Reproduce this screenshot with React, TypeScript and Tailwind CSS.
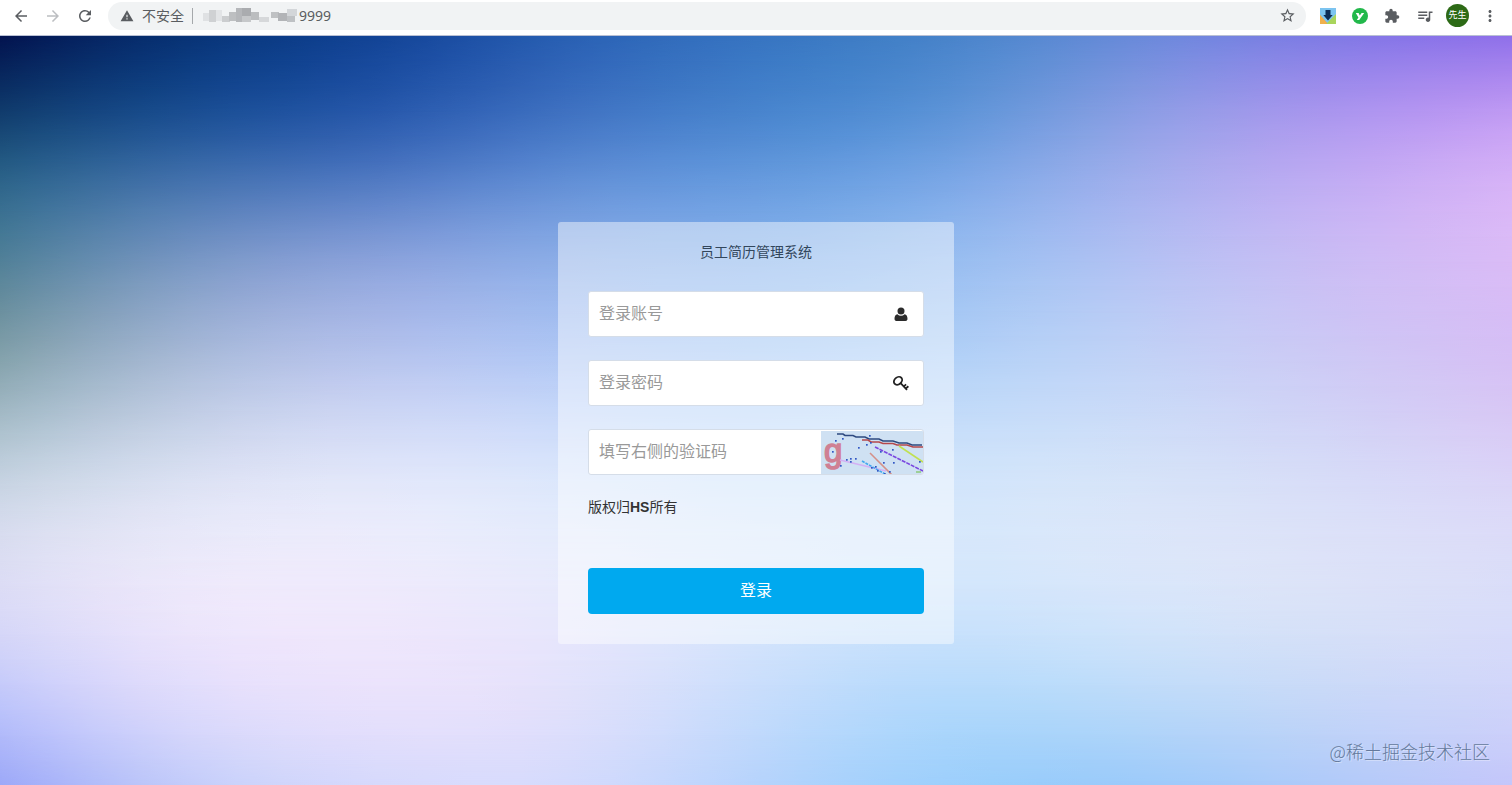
import React from "react";
import {
  MdArrowBack,
  MdArrowForward,
  MdRefresh,
  MdWarning,
  MdStarBorder,
  MdExtension,
  MdQueueMusic,
  MdMoreVert,
} from "react-icons/md";

// Wallpaper colours on an even grid: one list per row, top to bottom.
const palette: string[][] = [
  ["#03134f", "#083878", "#0f4096", "#2c62b6", "#3675c2", "#4484c8", "#6c90dc", "#8078e6", "#9070ea"],
  ["#0c3a6a", "#124c94", "#1e4fa8", "#4070c2", "#4282cc", "#5090d4", "#90a4e4", "#ac90f0", "#c49cf4"],
  ["#2f6a90", "#4a78b4", "#5078c4", "#6896dc", "#669ce0", "#7aaaea", "#a8b2ee", "#c4acf4", "#dab6f8"],
  ["#508098", "#809cca", "#93a4de", "#90b2ea", "#84b0ec", "#96c0f0", "#b4c4f4", "#ccbcf4", "#dcbcf6"],
  ["#7898a0", "#a4b6d8", "#b0bcec", "#a8c2f4", "#9cc4f4", "#a8ccf6", "#c0d2f6", "#ccc6f4", "#d4bcf6"],
  ["#a0b8c4", "#c4d0e8", "#d0d6f6", "#c8d8fa", "#b8d6fb", "#c2dcfa", "#cadcf8", "#d0d2f6", "#d8c6f4"],
  ["#ccd8e6", "#e2e6f8", "#e8ecfc", "#dfeafc", "#d2e6fc", "#d4e8fc", "#dae6f8", "#d6def8", "#dcd6f8"],
  ["#e0e0f4", "#f1edfc", "#f0edfc", "#e8edfc", "#e0ecfc", "#d6e8fc", "#e0e8fa", "#e0e4f8", "#dcdff8"],
  ["#d8d8f8", "#f2e8fc", "#f0e6fc", "#e8e6fc", "#d4e4fc", "#c4e0fc", "#d2e6fc", "#d8e2f6", "#d8dcfa"],
  ["#bcc4fc", "#e3defc", "#ece2fc", "#e6e0fa", "#c4dcfc", "#a8d6fc", "#b8daf8", "#c4d6f8", "#d0d4fa"],
  ["#9ca8f8", "#c8d2fa", "#d8dafc", "#dadcfe", "#b4d2fc", "#98d0fc", "#98c8fa", "#b0ccf8", "#c4c6fa"],
];

type Rgb = number[];

const toRgb = (hex: string): Rgb => [1, 3, 5].map((i) => parseInt(hex.slice(i, i + 2), 16));

// Cubic B-spline through a run of values, with the end values extended outwards.
function smooth<T>(items: T[], mix: (parts: T[], weights: number[]) => T, steps: number, extend: (a: T, b: T) => T): T[] {
  const n = items.length;
  const padded = [extend(items[0], items[1]), ...items, extend(items[n - 1], items[n - 2])];
  const out: T[] = [];
  for (let k = 0; k <= (n - 1) * steps; k++) {
    const i = Math.min(Math.floor(k / steps), n - 2);
    const t = k / steps - i;
    const weights = [
      (1 - t) ** 3 / 6,
      (3 * t ** 3 - 6 * t ** 2 + 4) / 6,
      (-3 * t ** 3 + 3 * t ** 2 + 3 * t + 1) / 6,
      t ** 3 / 6,
    ];
    const parts = [0, 1, 2, 3].map((d) => padded[Math.min(i + d, n + 1)]);
    out.push(mix(parts, weights));
  }
  return out;
}

const mixRgb = (parts: Rgb[], w: number[]): Rgb => [0, 1, 2].map((c) => parts.reduce((s, p, i) => s + p[c] * w[i], 0));
const extendRgb = (a: Rgb, b: Rgb): Rgb => a.map((v, c) => 2 * v - b[c]);
const mixRow = (rows: Rgb[][], w: number[]): Rgb[] => rows[0].map((_, j) => mixRgb(rows.map((r) => r[j]), w));
const extendRow = (a: Rgb[], b: Rgb[]): Rgb[] => a.map((v, j) => extendRgb(v, b[j]));

const wallpaper: string[][] = smooth(
  palette.map((row) => smooth(row.map(toRgb), mixRgb, 4, extendRgb)),
  mixRow,
  3,
  extendRow,
).map((row) => row.map((c) => `rgb(${c.map((v) => Math.max(0, Math.min(255, Math.round(v)))).join(",")})`));

function Wallpaper() {
  const last = wallpaper.length - 1;
  return (
    <svg className="absolute inset-0 size-full" viewBox="0 0 100 100" preserveAspectRatio="none" aria-hidden="true">
      <defs>
        {wallpaper.map((row, i) => (
          <linearGradient key={i} id={`row${i}`} gradientUnits="userSpaceOnUse" x1="0" y1="0" x2="100" y2="0">
            {row.map((color, j) => (
              <stop key={j} offset={j / (row.length - 1)} stopColor={color} />
            ))}
          </linearGradient>
        ))}
        {wallpaper.map((_, i) => (
          <React.Fragment key={i}>
            <linearGradient
              id={`fade${i}`}
              gradientUnits="userSpaceOnUse"
              x1="0"
              x2="0"
              y1={((i - 1) * 100) / last}
              y2={(i * 100) / last}
            >
              <stop offset="0" stopColor="#fff" stopOpacity="0" />
              <stop offset="1" stopColor="#fff" stopOpacity="1" />
            </linearGradient>
            <mask id={`mask${i}`} maskUnits="userSpaceOnUse" x="0" y="0" width="100" height="100">
              <rect width="100" height="100" fill={`url(#fade${i})`} />
            </mask>
          </React.Fragment>
        ))}
      </defs>
      {wallpaper.map((_, i) => (
        <rect key={i} width="100" height="100" fill={`url(#row${i})`} mask={i ? `url(#mask${i})` : undefined} />
      ))}
    </svg>
  );
}

function MaskedHost() {
  return (
    <svg className="h-4 w-24 shrink-0" viewBox="0 0 96 16" aria-hidden="true">
      <rect x="0" y="5" width="7" height="8" fill="#dfe1e3" />
      <rect x="6" y="2" width="7" height="12" fill="#cfd1d3" />
      <rect x="13" y="2" width="6" height="11" fill="#e2e4e6" />
      <rect x="19" y="8" width="8" height="6" fill="#cbcdcf" />
      <rect x="26" y="4" width="8" height="9" fill="#bdbfc1" />
      <rect x="33" y="0" width="6" height="14" fill="#b5b7ba" />
      <rect x="39" y="0" width="9" height="8" fill="#aaacaf" />
      <rect x="39" y="8" width="9" height="6" fill="#c6c8ca" />
      <rect x="48" y="4" width="8" height="8" fill="#bbbdbf" />
      <rect x="56" y="9" width="10" height="5" fill="#d6d8da" />
      <rect x="68" y="4" width="8" height="6" fill="#bfc1c3" />
      <rect x="75" y="5" width="9" height="8" fill="#b2b4b7" />
      <rect x="84" y="1" width="10" height="7" fill="#d3d6d9" />
      <rect x="84" y="8" width="8" height="6" fill="#bec1c4" />
    </svg>
  );
}

function DownloadIcon() {
  return (
    <svg className="size-4" viewBox="0 0 16 16" aria-hidden="true">
      <rect width="16" height="16" fill="#7cc4f0" />
      <path d="M0 7 8 16H0z" fill="#f2a23c" />
      <path d="M16 6v10H6z" fill="#a9d55c" />
      <path d="M0 7 7 15 5 16H0z" fill="#f0b04c" />
      <path d="M5.5 2h5v5h2.200L8 12.600 3.300 7h2.200z" fill="#0d2d55" />
    </svg>
  );
}

function GreenIcon() {
  return (
    <svg className="size-4" viewBox="0 0 16 16" aria-hidden="true">
      <circle cx="8" cy="8" r="8" fill="#22b84b" />
      <path d="M3.800 5h2.800l1.200 2.400L9.600 5h2.600L7.200 12H4.800l1.600-2.400z" fill="#fff" />
    </svg>
  );
}

function UserIcon() {
  return (
    <svg className="size-4" viewBox="0 0 16 16" fill="#2b2b2b" aria-hidden="true">
      <circle cx="8" cy="5" r="3.500" />
      <path d="M4.400 8.200C2.300 8.600 1.500 10.300 1.500 12.800c0 1.400.8 2.200 2 2.200h9c1.200 0 2-.8 2-2.200 0-2.500-.8-4.200-2.900-4.600a4.900 4.900 0 0 1-7.200 0z" />
    </svg>
  );
}

function KeyIcon() {
  return (
    <svg className="size-4" viewBox="0 0 16 16" fill="none" stroke="#222" strokeWidth="1.800" aria-hidden="true">
      <ellipse cx="5" cy="5.800" rx="4.500" ry="3.500" transform="rotate(-40 5 5.800)" />
      <path d="M7.600 8.200 14 14.800M15.400 11.200l-2.800 2.400M13.100 9.400l-2.600 2.200" />
    </svg>
  );
}

const dots = [
  [22, 8], [49, 5], [15, 10], [38, 17], [46, 14], [50, 12], [72, 19], [60, 21], [73, 32], [63, 32], [12, 21],
  [26, 29], [30, 28], [30, 31], [35, 28], [51, 37], [55, 36], [57, 40], [20, 35], [69, 41], [64, 43], [99, 31],
];

function Captcha() {
  return (
    <svg className="mt-px h-[43px] w-[102px]" viewBox="0 0 102 43" role="img" aria-label="验证码">
      <rect width="102" height="44" fill="#cfe1f3" />
      <text
        x="3"
        y="31"
        fontFamily="Liberation Sans"
        fontSize="33"
        fill="#cf8094"
        stroke="#cf8094"
        strokeWidth="1.500"
      >
        g
      </text>
      <g fill="none" strokeWidth="1.600">
        <path d="M16 3h6l2 1.500h8l3 1.500h9l4 2h10l4 2h10l6 2h8l5 2h10" stroke="#2e4a80" />
        <path d="M41 9h6l3 2h8l4 1.500h10l4 1.500h10l6 2h10" stroke="#b5484c" />
        <path d="m54 16 48 24" stroke="#7a48e0" strokeDasharray="4 1" />
        <path d="m78 15 24 16" stroke="#c0e050" />
        <path d="m49 22 22 22" stroke="#d49088" />
        <path d="m19 29 46 11" stroke="#d3b0f4" />
        <path d="m41 30 23 13" stroke="#43a9ee" strokeDasharray="3 1" />
        <path d="M95 41h5" stroke="#8cc878" />
      </g>
      {dots.map(([x, y]) => (
        <rect key={`${x}-${y}`} x={x - 1} y={y - 1} width="1.700" height="1.700" fill="#3158c4" />
      ))}
    </svg>
  );
}

function BrowserBar() {
  return (
    <header className="relative flex h-9 items-center border-b border-[#b9c0d4] bg-white pr-[13px] pb-1 pl-3 text-[#5a5d61]">
      <nav className="flex items-center gap-3.5 pr-3.5">
        <button aria-label="后退"><MdArrowBack size={18} /></button>
        <button aria-label="前进" className="text-[#bcbec1]"><MdArrowForward size={18} /></button>
        <button aria-label="刷新"><MdRefresh size={18} /></button>
      </nav>
      <div className="flex h-7 min-w-0 flex-1 items-center rounded-full bg-[#f1f3f4] pr-2.5 pl-3 text-sm">
        <MdWarning size={14} className="shrink-0" />
        <span className="ml-2 shrink-0">不安全</span>
        <span className="mr-2.5 ml-2 h-4 w-px shrink-0 bg-[#a5a8ab]" />
        <MaskedHost />
        <input
          aria-label="地址"
          defaultValue="9999"
          className="min-w-0 flex-1 bg-transparent font-['Noto_Sans',sans-serif] text-sm outline-none"
        />
        <button aria-label="收藏"><MdStarBorder size={17} /></button>
      </div>
      <div className="flex items-center gap-4 pl-3.5">
        <button aria-label="下载"><DownloadIcon /></button>
        <button aria-label="扩展"><GreenIcon /></button>
        <button aria-label="扩展程序"><MdExtension size={16} /></button>
        <button aria-label="媒体"><MdQueueMusic size={18} /></button>
      </div>
      <div className="flex items-center gap-3 pl-3">
        <button className="size-[23px] rounded-full bg-[#2d6a16] text-center text-[9px] leading-[23px] whitespace-nowrap text-white">
          先生
        </button>
        <button aria-label="更多"><MdMoreVert size={18} /></button>
      </div>
    </header>
  );
}

const box =
  "flex h-[46px] items-center overflow-hidden rounded-[3px] border border-[#d5dde8] bg-white";
const field =
  "h-full min-w-0 flex-1 bg-transparent px-2.5 text-base text-[#333] outline-none placeholder:text-[#999]";

export default function App() {
  return (
    <div className="flex min-h-screen flex-col font-['Liberation_Sans','Noto_Sans_CJK_SC',sans-serif]">
      <BrowserBar />
      <main className="relative flex flex-1 flex-col items-center overflow-hidden">
        <Wallpaper />
        <form
          className="relative mt-[186px] mb-8 w-full max-w-[396px] rounded-[3px] bg-white/45 px-[30px] pt-5 pb-[30px] text-sm text-[#333]"
          onSubmit={(e) => e.preventDefault()}
        >
          <h1 className="text-center leading-5 text-[#32465c]">员工简历管理系统</h1>
          <div className="mt-[29px] flex flex-col gap-[23px]">
            <label className={box}>
              <input className={field} aria-label="登录账号" placeholder="登录账号" />
              <span className="pr-3.5"><UserIcon /></span>
            </label>
            <label className={box}>
              <input className={field} type="password" aria-label="登录密码" placeholder="登录密码" />
              <span className="pr-3.5"><KeyIcon /></span>
            </label>
            <label className={box}>
              <input className={field} aria-label="填写右侧的验证码" placeholder="填写右侧的验证码" />
              <Captcha />
            </label>
          </div>
          <p className="mt-[22px] leading-5">
            版权归<b>HS</b>所有
          </p>
          <button className="mt-[51px] h-[46px] w-full rounded-[4px] bg-[#00a9ef] text-base text-white">登录</button>
        </form>
        <p className="absolute right-[22px] bottom-5 font-['Noto_Sans_CJK_SC',sans-serif] text-lg font-light text-[#64799c] [text-shadow:1px_1px_0_#ffffff66]">
          @稀土掘金技术社区
        </p>
      </main>
    </div>
  );
}
